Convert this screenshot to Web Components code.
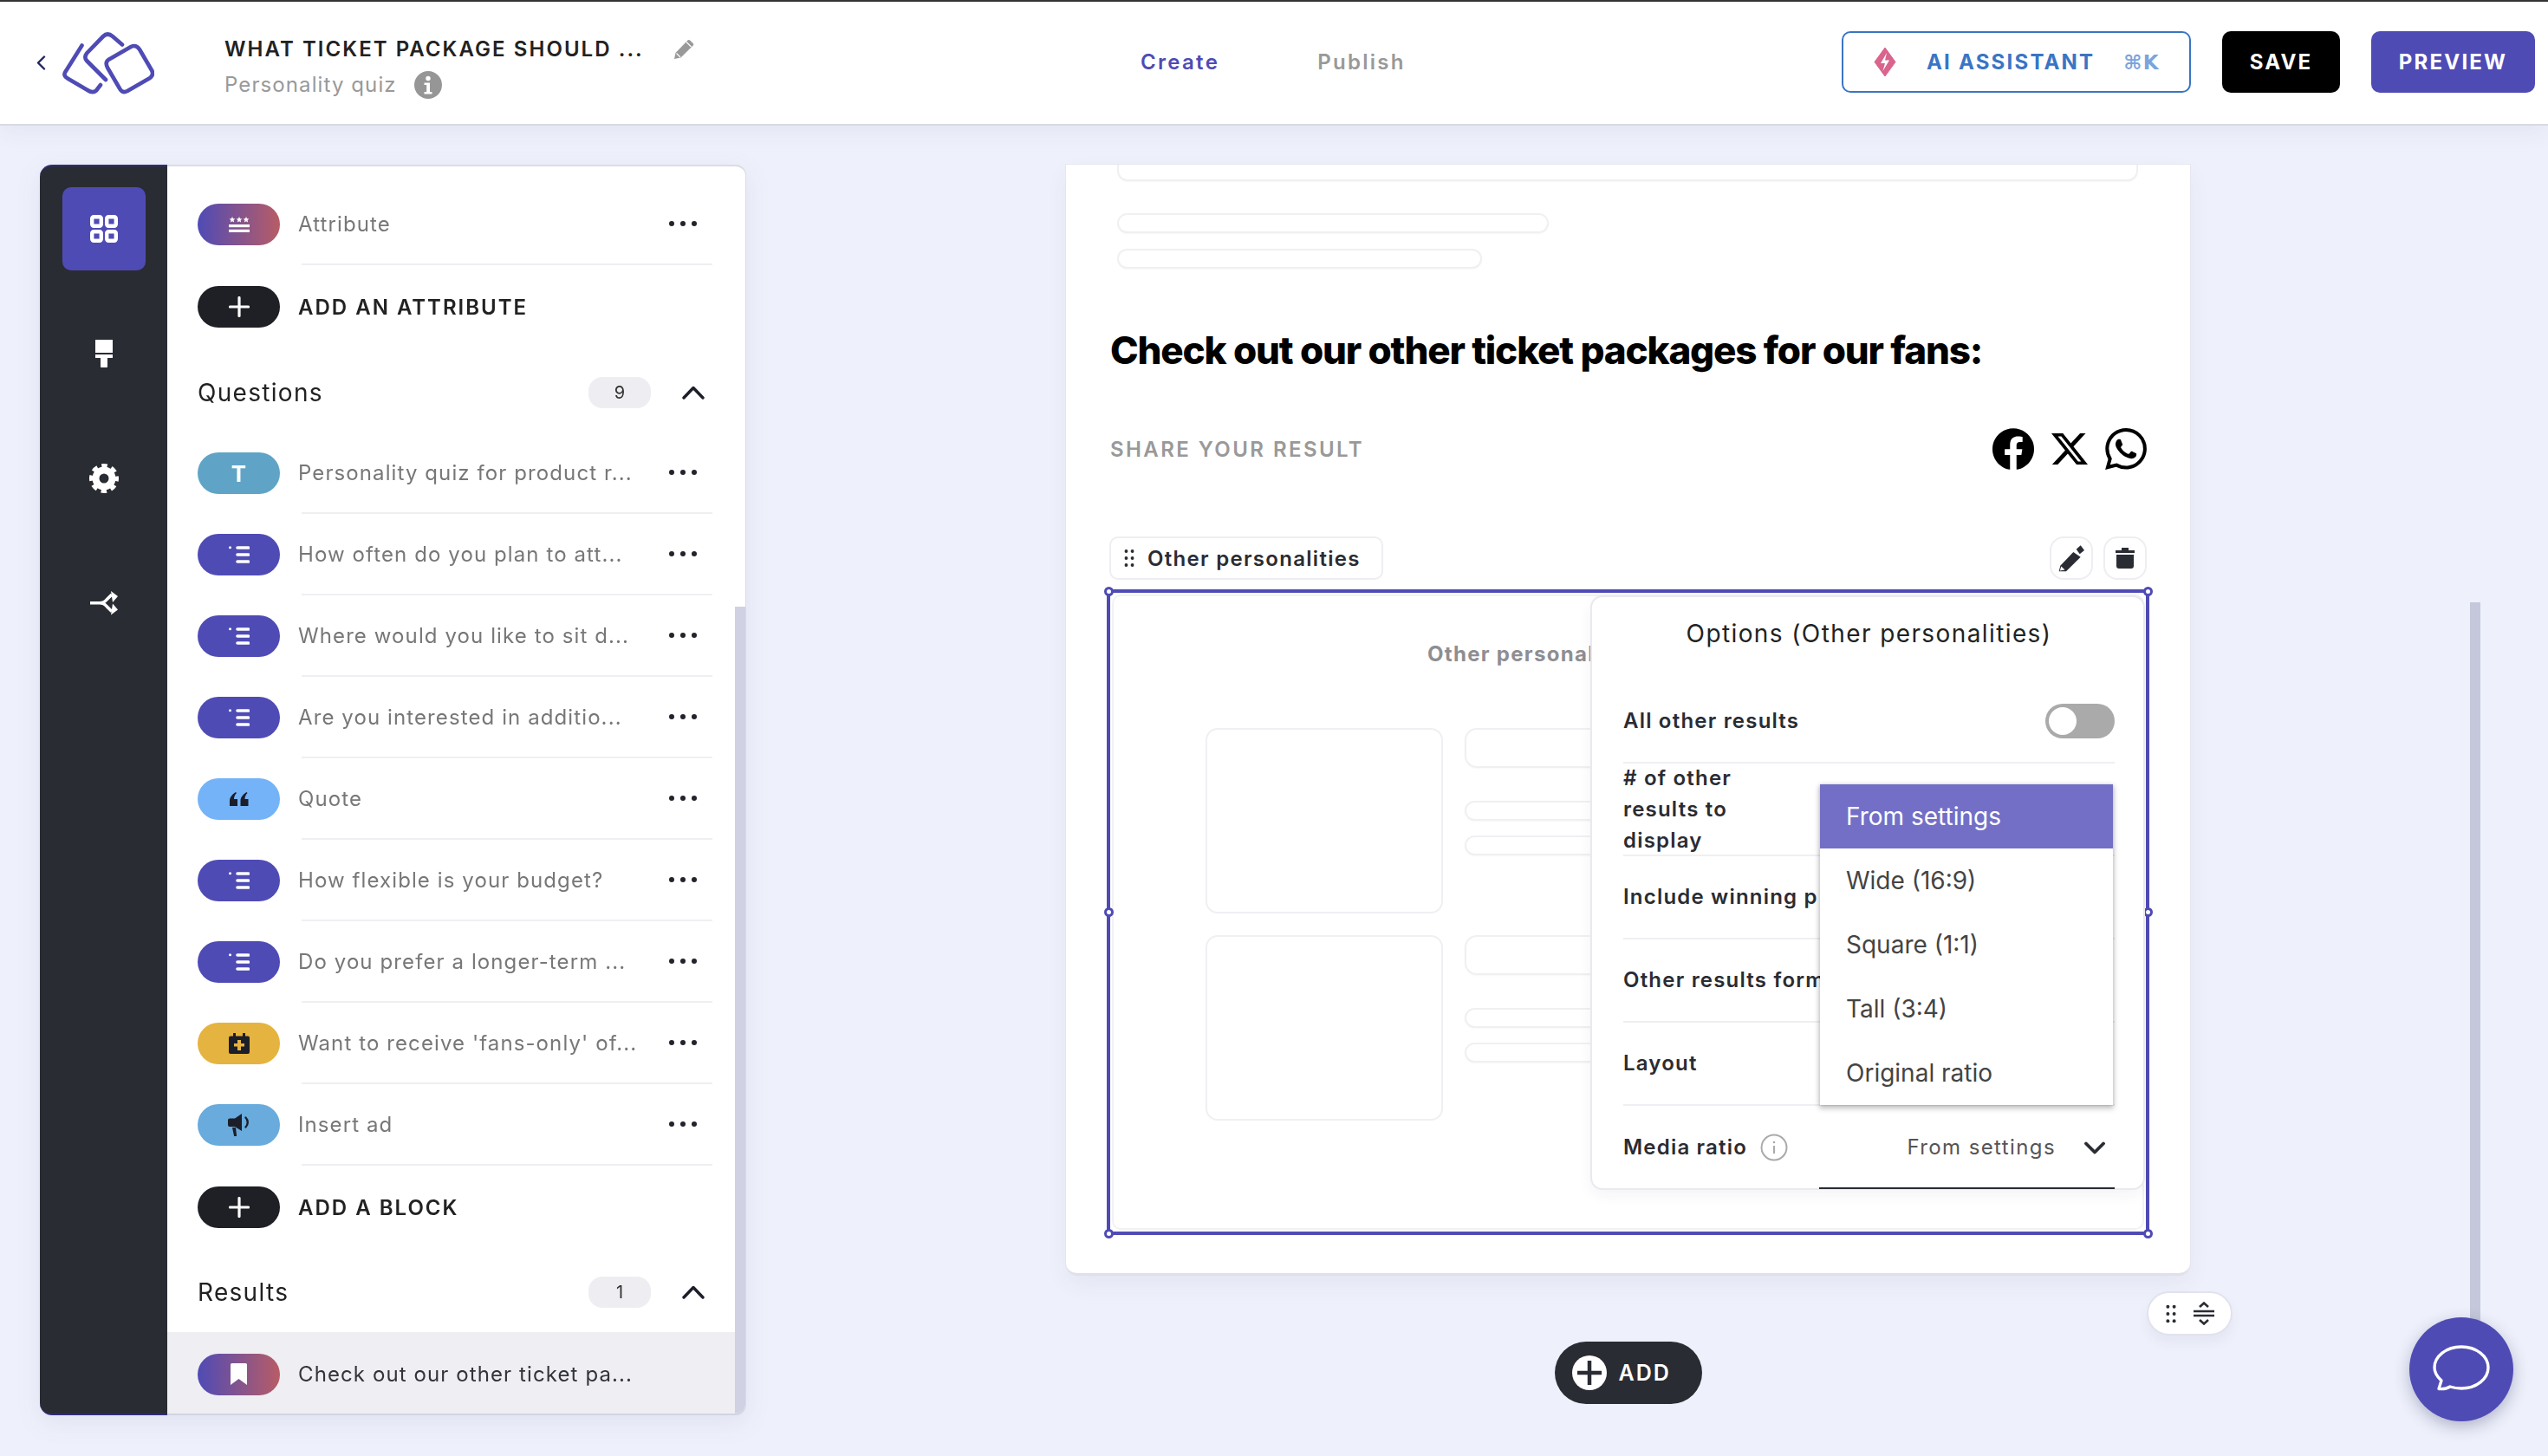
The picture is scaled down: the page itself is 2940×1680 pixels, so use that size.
<!doctype html>
<html lang="en">
  <head>
    <meta charset="UTF-8">
    <title>Quiz editor</title>
    <style>
      html, body { margin: 0; padding: 0; }
      body { width: 2940px; height: 1680px; overflow: hidden; font-family: Inter, "Liberation Sans", sans-serif; background: #eef1fb; }
    </style>
  </head>
  <body>
    <quiz-app>
      <quiz-topbar slot="top"></quiz-topbar>
      <quiz-sidebar slot="side">
        <block-row icon="attr" tone="grad">Attribute</block-row>
        <add-row last>ADD AN ATTRIBUTE</add-row>
        <section-head count="9" style="height: 97px">Questions</section-head>
        <block-row icon="t" tone="teal">Personality quiz for product r...</block-row>
        <block-row icon="list" tone="indigo">How often do you plan to att...</block-row>
        <block-row icon="list" tone="indigo">Where would you like to sit d...</block-row>
        <block-row icon="list" tone="indigo">Are you interested in additio...</block-row>
        <block-row icon="quote" tone="sky">Quote</block-row>
        <block-row icon="list" tone="indigo">How flexible is your budget?</block-row>
        <block-row icon="list" tone="indigo">Do you prefer a longer-term ...</block-row>
        <block-row icon="cal" tone="amber">Want to receive 'fans-only' of...</block-row>
        <block-row icon="mega" tone="blue">Insert ad</block-row>
        <add-row last>ADD A BLOCK</add-row>
        <section-head count="1" style="height: 96px">Results</section-head>
        <block-row icon="mark" tone="grad" selected>Check out our other ticket pa...</block-row>
      </quiz-sidebar>
      <quiz-canvas slot="main">
        <results-block></results-block>
      </quiz-canvas>
    </quiz-app>

    <script>
      const ICONS = {
        back: `<svg width="11" height="17" viewBox="0 0 11 17"><path d="M9 1.5 2 8.5l7 7" fill="none" stroke="#23255c" stroke-width="2.4" stroke-linecap="round" stroke-linejoin="round"/></svg>`,
        logo: `<svg width="106" height="74" viewBox="71 35 106 74"><g fill="none" stroke="#4f4bb5" stroke-width="4.6" stroke-linecap="round" stroke-linejoin="round"><path d="M93.5 51.500 75 81Q71 86 77 89.500L100 103Q106 107 110 103.500L115 97"/><path d="M140 50.500 129 41Q123 36 118 41L99.500 60Q95.500 65 99 69L121 91"/><path d="M124 68 150 53Q156 50 160 56L174 80Q177 85 172 89L146 104Q140 107 137 101L123 77Q120 71 124 68Z"/></g></svg>`,
        pencil: `<svg width="25" height="24" viewBox="0 0 25 24"><path d="M1 23l1.500-7L16.500 1.500c.8-.8 1.800-.8 2.600 0l3.600 3.400c.8.800.8 1.800 0 2.600L8.500 21.500z" fill="#999"/><path d="M15 3.500l5.500 5.500M3.500 16.500l4.500 4.500" stroke="#fff" stroke-width="1.200"/></svg>`,
        info: `<svg width="32" height="32" viewBox="0 0 32 32"><circle cx="16" cy="16" r="16" fill="#969696"/><circle cx="16" cy="8.500" r="2.700" fill="#fff"/><path d="M11.500 13.500h6.500v10.500h2.500v2.500h-9V24h2.700v-8h-2.700z" fill="#fff"/></svg>`,
        spark: `<svg width="26" height="33" viewBox="0 0 26 33"><path d="M13 0 25 16.500 13 33 1 16.500z" fill="#d9648d" stroke="#d9648d" stroke-linejoin="round"/><path d="M15 6 8 18h5l-2.500 9L18 14.500h-5z" fill="#fff"/></svg>`,
        grid: `<svg width="32" height="32" viewBox="0 0 32 32"><g fill="none" stroke="#fff" stroke-width="4.400"><rect x="2.200" y="2.200" width="10.600" height="10.600" rx="2"/><rect x="19.200" y="2.200" width="10.600" height="10.600" rx="2"/><rect x="2.200" y="19.200" width="10.600" height="10.600" rx="2"/><rect x="19.200" y="19.200" width="10.600" height="10.600" rx="2"/></g></svg>`,
        brush: `<svg width="20" height="32" viewBox="0 0 20 32"><path d="M0 0h20v15H0zM0 17h20v4h-6v9a4 4 0 0 1-8 0v-9H0z" fill="#fff"/></svg>`,
        gear: `<svg width="34" height="34" viewBox="0 0 34 34"><circle cx="17" cy="17" r="9.500" fill="none" stroke="#fff" stroke-width="8"/><circle cx="17" cy="17" r="14.500" fill="none" stroke="#fff" stroke-width="5" stroke-dasharray="6.400 5" stroke-dashoffset="3.200"/></svg>`,
        branch: `<svg width="32" height="32" viewBox="0 0 32 32"><path d="M0 15.700H11Q16 15.700 19 12L25 6M11 15.700Q16 15.700 19 19.500L25 25.500" fill="none" stroke="#fff" stroke-width="3.500"/><path d="M24 2 32 8 26 15zM24 29.400 32 23.400 26 16.400z" fill="#fff"/></svg>`,
        attr: `<svg width="24" height="18" viewBox="0 0 24 18"><g fill="#fff"><path d="M4 0l1 2.300 2.400.2-1.800 1.600.5 2.400L4 5.300 1.900 6.500l.5-2.400L.6 2.500 3 2.300z"/><path transform="translate(8)" d="M4 0l1 2.300 2.400.2-1.800 1.600.5 2.400L4 5.300 1.900 6.500l.5-2.400L.6 2.500 3 2.300z"/><path transform="translate(16)" d="M4 0l1 2.300 2.400.2-1.800 1.600.5 2.400L4 5.300 1.900 6.500l.5-2.400L.6 2.500 3 2.300z"/><rect y="9" width="24" height="3.200"/><rect y="14.800" width="24" height="3.200"/></g></svg>`,
        plus: `<svg width="24" height="24" viewBox="0 0 24 24"><path d="M12 1.500v21M1.500 12h21" stroke="#fff" stroke-width="3.200" stroke-linecap="round"/></svg>`,
        list: `<svg width="24" height="20" viewBox="0 0 24 20"><circle cx="1.500" cy="1.800" r="1.500" fill="#fff"/><path d="M10 2h12.500M10 10h12.500M10 18h12.500" stroke="#fff" stroke-width="3.600" stroke-linecap="round"/></svg>`,
        quote: `<svg width="22" height="16" viewBox="0 0 22 16"><g fill="#1c1e2a"><path d="M7 0C3 2.500 0 6 0 10v6h9V8H5c0-3 1-5 3-7z"/><path transform="translate(12.500)" d="M7 0C3 2.500 0 6 0 10v6h9V8H5c0-3 1-5 3-7z"/></g></svg>`,
        cal: `<svg width="24" height="24" viewBox="0 0 24 24"><path d="M5 0h3v3.500h8V0h3v3.500h3a2 2 0 0 1 2 2V22a2 2 0 0 1-2 2H2a2 2 0 0 1-2-2V5.500a2 2 0 0 1 2-2h3z" fill="#1c1e2a"/><path d="M10 8h4v4h4v3.500h-4V20h-4v-4.500H6V12h4z" fill="#e5b33f"/></svg>`,
        mega: `<svg width="25" height="26" viewBox="0 0 25 26"><g fill="#1c1e2a"><path d="M16 0v20L8 15H5v0H2a2 2 0 0 1-2-2V7.500a2 2 0 0 1 2-2h6z"/><path d="M5 16h4l1 9a1.500 1.500 0 0 1-3 .5z"/></g><path d="M20.500 4.500c3 3 3 8 0 11" fill="none" stroke="#1c1e2a" stroke-width="2.400" stroke-linecap="round"/></svg>`,
        mark: `<svg width="19" height="25" viewBox="0 0 19 25"><path d="M1.500 0h16A1.500 1.500 0 0 1 19 1.500V25l-9.500-7L0 25V1.500A1.500 1.500 0 0 1 1.500 0z" fill="#fff"/></svg>`,
        up: `<svg width="26" height="16" viewBox="0 0 26 16"><path d="M2 14 13 2.500 24 14" fill="none" stroke="#1c1e2a" stroke-width="3.400" stroke-linecap="round" stroke-linejoin="round"/></svg>`,
        down: `<svg width="24" height="15" viewBox="0 0 24 15"><path d="M2 2.500 12 12.500 22 2.500" fill="none" stroke="#2a2c33" stroke-width="3.800" stroke-linecap="round" stroke-linejoin="round"/></svg>`,
        dots: `<svg width="14" height="26" viewBox="0 0 14 26"><g fill="#2a2c33"><circle cx="2.500" cy="3" r="2.500"/><circle cx="11.500" cy="3" r="2.500"/><circle cx="2.500" cy="13" r="2.500"/><circle cx="11.500" cy="13" r="2.500"/><circle cx="2.500" cy="23" r="2.500"/><circle cx="11.500" cy="23" r="2.500"/></g></svg>`,
        edit: `<svg width="31" height="32" viewBox="0 0 31 32"><path d="M20.700 5.700 25.700 1.300 30 7 24.700 11.300z" fill="#2a2c33"/><path d="M17.300 9 25.700 14.700 9 31.300 .7 31.300 2.300 24.700z" fill="#2a2c33"/><path d="M3.300 25.500 7.500 29.600 1.800 30.600z" fill="#fff"/></svg>`,
        trash: `<svg width="22" height="24" viewBox="0 0 22 24"><path d="M7 0h8v3h7v3H0V3h7zM1 8h20v13a3 3 0 0 1-3 3H4a3 3 0 0 1-3-3z" fill="#2a2c33"/></svg>`,
        fb: `<svg width="48" height="48" viewBox="0 0 24 24"><path fill="#000" d="M24 12.073c0-6.627-5.373-12-12-12s-12 5.373-12 12c0 5.990 4.388 10.954 10.125 11.854v-8.385H7.078v-3.470h3.047V9.430c0-3.007 1.792-4.669 4.533-4.669 1.312 0 2.686.235 2.686.235v2.953H15.830c-1.491 0-1.956.925-1.956 1.874v2.250h3.328l-.532 3.470h-2.796v8.385C19.612 23.027 24 18.062 24 12.073z"/></svg>`,
        x: `<svg width="42" height="40" viewBox="0 0 24 24" preserveAspectRatio="none"><path fill="#000" d="M18.901 1.153h3.680l-8.040 9.190L24 22.846h-7.406l-5.800-7.584-6.638 7.584H.474l8.600-9.830L0 1.154h7.594l5.243 6.932ZM17.610 20.644h2.039L6.486 3.240H4.298Z"/></svg>`,
        wa: `<svg width="48" height="48" viewBox="0 0 24 24"><path fill="#000" d="M17.472 14.382c-.297-.149-1.758-.867-2.030-.967-.273-.099-.471-.148-.670.150-.197.297-.767.966-.940 1.164-.173.199-.347.223-.644.075-.297-.150-1.255-.463-2.390-1.475-.883-.788-1.480-1.761-1.653-2.059-.173-.297-.018-.458.130-.606.134-.133.298-.347.446-.520.149-.174.198-.298.298-.497.099-.198.050-.371-.025-.520-.075-.149-.669-1.612-.916-2.207-.242-.579-.487-.500-.669-.510-.173-.008-.371-.010-.570-.010-.198 0-.520.074-.792.372-.272.297-1.040 1.016-1.040 2.479 0 1.462 1.065 2.875 1.213 3.074.149.198 2.096 3.200 5.077 4.487.709.306 1.262.489 1.694.625.712.227 1.360.195 1.871.118.571-.085 1.758-.719 2.006-1.413.248-.694.248-1.289.173-1.413-.074-.124-.272-.198-.570-.347m-5.421 7.403h-.004a9.870 9.870 0 01-5.031-1.378l-.361-.214-3.741.982.998-3.648-.235-.374a9.860 9.860 0 01-1.510-5.260c.001-5.450 4.436-9.884 9.888-9.884 2.640 0 5.122 1.030 6.988 2.898a9.825 9.825 0 012.893 6.994c-.003 5.450-4.437 9.884-9.885 9.884m8.413-18.297A11.815 11.815 0 0012.050 0C5.495 0 .160 5.335.157 11.892c0 2.096.547 4.142 1.588 5.945L.057 24l6.305-1.654a11.882 11.882 0 005.683 1.448h.005c6.554 0 11.890-5.335 11.893-11.893a11.821 11.821 0 00-3.480-8.413Z"/></svg>`,
        iline: `<svg width="32" height="32" viewBox="0 0 32 32"><circle cx="16" cy="16" r="14.500" fill="none" stroke="#aaa" stroke-width="2"/><path d="M16 14v9" stroke="#aaa" stroke-width="2"/><circle cx="16" cy="10" r="1.300" fill="#aaa"/></svg>`,
        circlePlus: `<svg width="40" height="40" viewBox="0 0 40 40"><circle cx="20" cy="20" r="20" fill="#fff"/><path d="M20 6v28M6 20h28" stroke="#2a2c33" stroke-width="4.500"/></svg>`,
        resize: `<svg width="24" height="27" viewBox="0 0 24 27"><path d="M7 6l5-4.500L17 6M7 21l5 4.500L17 21" fill="none" stroke="#2a2c33" stroke-width="2.600"/><path d="M0 11h24M0 16h24" stroke="#2a2c33" stroke-width="2.400"/></svg>`,
        chat: `<svg width="68" height="58" viewBox="0 0 68 58"><path d="M8 50.500 11 41C6 36.500 3 31.500 3 26 3 13 16.500 2 34 2s31 11 31 24-13.500 24-31 24c-4.500 0-9-.7-13-2-4 2.500-8 3-13 2.500z" fill="none" stroke="#fff" stroke-width="3.400" stroke-linejoin="round"/></svg>`
      }

      class Base extends HTMLElement {
        constructor() {
          super()
          this.attachShadow({mode: "open"})
        }
      }

      class QuizApp extends Base {
        connectedCallback() {
          this.shadowRoot.innerHTML = `
            <style>
              :host { display: flex; flex-direction: column; width: 2940px; height: 1680px; position: relative; overflow: hidden; background: #eef1fb; }
              .work { display: flex; flex: 1; padding: 45px 0 0 46px; align-items: flex-start; }
              .page-bar { position: absolute; left: 2850px; top: 695px; width: 12px; height: 840px; background: #c5c7da; }
              .chat { position: absolute; left: 2780px; top: 1520px; width: 120px; height: 120px; border-radius: 50%; background: #4f4bb5; display: flex; align-items: center; justify-content: center; box-shadow: 0 6px 18px rgba(40,40,90,.3); }
              .chat svg { margin-top: 2px; }
            </style>
            <slot name="top"></slot>
            <div class="work">
              <slot name="side"></slot>
              <slot name="main"></slot>
            </div>
            <div class="page-bar"></div>
            <div class="chat">${ICONS.chat}</div>`
        }
      }

      class QuizTopbar extends Base {
        connectedCallback() {
          this.shadowRoot.innerHTML = `
            <style>
              :host { display: grid; grid-template-columns: 1316px 1fr auto; height: 145px; box-sizing: border-box; flex: none; background: #fff; border-top: 2px solid #333; border-bottom: 2px solid #d9d9e3; box-shadow: 0 8px 24px rgba(60,60,120,.06); position: relative; z-index: 2; color: #222; }
              .left { display: flex; align-items: center; padding-left: 42px; }
              .logo { margin: 0 81px 0 19px; display: flex; }
              .meta { margin-top: 16px; }
              .name { display: flex; align-items: center; gap: 34px; font-size: 24px; font-weight: 600; letter-spacing: 2.05px; line-height: 38px; white-space: nowrap; margin-top: -8px; }
              .sub { display: flex; align-items: center; gap: 20px; font-size: 24px; letter-spacing: 1.1px; color: #999; line-height: 34px; margin-top: 5px; }
              .tabs { display: flex; gap: 113px; font-size: 24px; font-weight: 600; letter-spacing: 2.3px; padding-top: 55px; color: #999; }
              .tabs b { font-weight: 600; color: #4f4bb5; }
              .actions { display: flex; gap: 36px; padding: 34px 15px 0 0; align-items: flex-start; }
              .btn { display: flex; align-items: center; justify-content: center; height: 71px; box-sizing: border-box; border-radius: 10px; font-size: 24px; font-weight: 700; letter-spacing: 2.2px; color: #fff; }
              .ai { width: 403px; background: #fff; border: 2px solid #3a75c4; color: #3a75c4; justify-content: flex-start; padding-left: 35px; }
              .ai span { margin-left: 35px; }
              .ai i { font-style: normal; margin-left: 33px; color: #7ba4dc; font-family: "DejaVu Sans", Inter, sans-serif; font-size: 23px; letter-spacing: 1px; }
              .save { width: 136px; background: #000; }
              .preview { width: 189px; background: #4f4bb5; }
            </style>
            <div class="left">
              ${ICONS.back}
              <div class="logo">${ICONS.logo}</div>
              <div class="meta">
                <div class="name">WHAT TICKET PACKAGE SHOULD ... ${ICONS.pencil}</div>
                <div class="sub">Personality quiz ${ICONS.info}</div>
              </div>
            </div>
            <div class="tabs"><b>Create</b><span>Publish</span></div>
            <div class="actions">
              <div class="btn ai">${ICONS.spark}<span>AI ASSISTANT</span><i>⌘K</i></div>
              <div class="btn save">SAVE</div>
              <div class="btn preview">PREVIEW</div>
            </div>`
        }
      }

      class QuizSidebar extends Base {
        connectedCallback() {
          const tabs = ["grid", "brush", "gear", "branch"]
          this.shadowRoot.innerHTML = `
            <style>
              :host { display: flex; width: 814px; height: 1443px; flex: none; filter: drop-shadow(0 8px 14px rgba(60,60,120,.08)); }
              .rail { width: 147px; flex: none; box-sizing: border-box; background: #2a2c33; border-radius: 14px 0 0 14px; border-top: 2px solid #2f2d7a; border-bottom: 2px solid #2f2d7a; padding: 24px 26px 0; display: flex; flex-direction: column; gap: 48px; }
              .rail div { width: 96px; height: 96px; border-radius: 10px; display: flex; align-items: center; justify-content: center; }
              .rail div:first-child { background: #4f4bb5; }
              .panel { flex: 1; position: relative; box-sizing: border-box; background: #fff; border-radius: 0 12px 12px 0; border-top: 2px solid #dcdce6; border-bottom: 2px solid #d3d3e0; box-shadow: 1px 0 0 #dcdce8; padding: 20px 38px 0 35px; display: flex; flex-direction: column; overflow: hidden; }
              .thumb { position: absolute; right: 0; top: 508px; bottom: 0; width: 12px; background: #d0d1e2; }
            </style>
            <div class="rail">${tabs.map(t => `<div>${ICONS[t]}</div>`).join("")}</div>
            <div class="panel"><slot></slot><span class="thumb"></span></div>`
        }
      }

      class BlockRow extends Base {
        connectedCallback() {
          const tones = {
            grad: "linear-gradient(90deg,#4f4bb5,#b85c66)", teal: "#5fa4c6", indigo: "#4f4bb5",
            sky: "#75b3f8", amber: "#e5b33f", blue: "#68abdc", dark: "#1f2026"
          }
          const name = this.getAttribute("icon")
          const glyph = name == "t" ? `<b>T</b>` : ICONS[name]
          const selected = this.hasAttribute("selected")
          this.shadowRoot.innerHTML = `
            <style>
              :host { display: flex; align-items: center; height: 94px; flex: none; ${selected ? "height: 97px; background: #eeeef3; margin: 0 -26px 0 -35px; padding: 0 26px 5px 35px;" : ""} }
              .pill { width: 95px; height: 48px; flex: none; border-radius: 24px; display: flex; align-items: center; justify-content: center; background: ${tones[this.getAttribute("tone")]}; color: #fff; font-size: 26px; }
              .body { flex: 1; height: 100%; box-sizing: border-box; margin-left: 25px; display: flex; align-items: center; justify-content: space-between; ${selected ? "" : "border-bottom: 2px solid #efeff3;"} }
              .label { margin-left: -4px; font-size: 24px; letter-spacing: 1.1px; color: ${selected ? "#33343a" : "#777"}; white-space: nowrap; }
              .more { display: flex; gap: 7px; margin-right: 18px; ${selected ? "visibility: hidden;" : ""} }
              .more i { width: 6px; height: 6px; border-radius: 50%; background: #22232b; }
            </style>
            <div class="pill">${glyph}</div>
            <div class="body"><span class="label"><slot></slot></span><span class="more"><i></i><i></i><i></i></span></div>`
        }
      }

      class AddRow extends Base {
        connectedCallback() {
          this.shadowRoot.innerHTML = `
            <style>
              :host { display: flex; align-items: center; height: 96px; flex: none; }
              .pill { width: 95px; height: 48px; border-radius: 24px; background: #1f2026; display: flex; align-items: center; justify-content: center; }
              .label { margin-left: 21px; font-size: 24px; font-weight: 600; letter-spacing: 2px; color: #222; }
            </style>
            <div class="pill">${ICONS.plus}</div>
            <span class="label"><slot></slot></span>`
        }
      }

      class SectionHead extends Base {
        connectedCallback() {
          this.shadowRoot.innerHTML = `
            <style>
              :host { display: flex; align-items: center; flex: none; padding-top: 4px; box-sizing: border-box; }
              .label { flex: 1; font-size: 28px; letter-spacing: 1.3px; color: #222; }
              .count { width: 72px; height: 36px; border-radius: 16px; background: #eeeef2; font-size: 20px; color: #333; display: flex; align-items: center; justify-content: center; }
              svg { margin: 0 9px 0 36px; }
            </style>
            <span class="label"><slot></slot></span>
            <span class="count">${this.getAttribute("count")}</span>${ICONS.up}`
        }
      }

      class QuizCanvas extends Base {
        connectedCallback() {
          this.shadowRoot.innerHTML = `
            <style>
              :host { display: flex; flex-direction: column; align-items: center; width: 1297px; margin-left: 370px; flex: none; position: relative; }
              .card { width: 100%; height: 1282px; box-sizing: border-box; background: #fff; border-radius: 0 0 14px 14px; border-bottom: 3px solid #e0e0ea; box-shadow: 0 0 0 1px #e6e6f0, 0 10px 26px rgba(60,60,120,.06); overflow: hidden; }
              .add { margin-top: 76px; width: 170px; height: 72px; border-radius: 36px; background: #2a2c33; color: #fff; display: flex; align-items: center; padding-left: 20px; box-sizing: border-box; gap: 14px; font-size: 25px; font-weight: 600; letter-spacing: 2px; }
              .chip { position: absolute; left: 1247px; top: 1300px; width: 99px; height: 51px; background: #fff; border: 2px solid #e2e2ee; box-sizing: border-box; border-radius: 26px; display: flex; align-items: center; justify-content: center; gap: 19px; box-shadow: 0 8px 14px rgba(60,60,120,.06); }
              .chip svg:first-child { transform: scale(.82); }
            </style>
            <div class="card"><slot></slot></div>
            <div class="add">${ICONS.circlePlus}ADD</div>
            <div class="chip">${ICONS.dots}${ICONS.resize}</div>`
        }
      }

      class ResultsBlock extends Base {
        connectedCallback() {
          const entry = `
            <div class="img"></div>
            <div class="copy"><div class="ph title"></div><div class="ph line"></div><div class="ph line"></div></div>`
          this.shadowRoot.innerHTML = `
            <style>
              :host { display: block; }
              .ph { border: 2px solid #f0f0f3; box-sizing: border-box; background: #fff; box-shadow: 0 1px 2px rgba(0,0,0,.03); }
              .top { height: 19px; margin: 0 60px 0 59px; border-top: 0; border-radius: 0 0 12px 12px; }
              .bar { height: 23px; border-radius: 12px; margin: 37px 0 0 59px; }
              .bar + .bar { margin-top: 18px; }
              h1 { margin: 64px 0 0 51px; font-size: 44px; line-height: 60px; font-weight: 800; letter-spacing: -1.17px; color: #000; }
              .share { display: flex; align-items: center; justify-content: space-between; margin: 60px 50px 0 51px; height: 48px; font-size: 24px; font-weight: 600; letter-spacing: 2.43px; color: #999; }
              .social { display: flex; align-items: center; gap: 20px; }
              .tools { display: flex; justify-content: space-between; margin: 77px 50px 0 50px; }
              .tag { display: flex; align-items: center; height: 50px; box-sizing: border-box; padding: 0 24px 0 14px; gap: 14px; background: #fff; border: 2px solid #eeeef2; border-radius: 10px; font-size: 24px; font-weight: 600; letter-spacing: 1.3px; color: #2a2c33; }
              .tag svg { transform: scale(.8); }
              .btns { display: flex; gap: 12px; }
              .btns div { width: 50px; height: 50px; box-sizing: border-box; border: 2px solid #eeeef2; border-radius: 16px; display: flex; align-items: center; justify-content: center; }
              .frame { position: relative; margin: 11px 47px 0 47px; height: 745px; box-sizing: border-box; border: 4px solid #4f4bb5; padding: 2px; }
              .inner { height: 100%; box-sizing: border-box; border: 2px solid #f2f2f5; border-radius: 10px; padding: 52px 0 0 362px; }
              .dot { position: absolute; width: 11px; height: 11px; border-radius: 50%; background: #fff; border: 3px solid #4f4bb5; box-sizing: border-box; margin: -5.5px; }
              .other { font-size: 24px; line-height: 30px; font-weight: 700; letter-spacing: 1.3px; color: #8e8e92; white-space: nowrap; }
              .rows { margin: 70px 0 0 -256px; display: grid; grid-template-columns: 274px 675px; gap: 25px; grid-auto-rows: 214px; }
              .img { border: 2px solid #f0f0f3; border-radius: 14px; }
              .copy .ph { border-radius: 14px; }
              .copy .title { height: 46px; margin-bottom: 38px; }
              .copy .line { height: 23px; margin-bottom: 17px; border-radius: 12px; }
            </style>
            <div class="ph top"></div>
            <div class="ph bar" style="width: 498px"></div>
            <div class="ph bar" style="width: 421px"></div>
            <h1>Check out our other ticket packages for our fans:</h1>
            <div class="share"><span>SHARE YOUR RESULT</span><span class="social">${ICONS.fb}${ICONS.x}${ICONS.wa}</span></div>
            <div class="tools">
              <div class="tag">${ICONS.dots}Other personalities</div>
              <div class="btns"><div>${ICONS.edit}</div><div>${ICONS.trash}</div></div>
            </div>
            <div class="frame">
              <div class="inner">
                <div class="other">Other personalities</div>
                <div class="rows">${entry}${entry}</div>
              </div>
              <i class="dot" style="left:-2px;top:-2px"></i><i class="dot" style="right:-2px;top:-2px"></i>
              <i class="dot" style="left:-2px;top:50%"></i><i class="dot" style="right:-2px;top:50%"></i>
              <i class="dot" style="left:-2px;bottom:-2px"></i><i class="dot" style="right:-2px;bottom:-2px"></i>
              <options-panel></options-panel>
            </div>`
        }
      }

      class OptionsPanel extends Base {
        connectedCallback() {
          const menu = ["From settings", "Wide (16:9)", "Square (1:1)", "Tall (3:4)", "Original ratio"]
          this.shadowRoot.innerHTML = `
            <style>
              :host { position: absolute; left: 554px; top: 3px; width: 640px; height: 686px; box-sizing: border-box; background: #fff; border: 2px solid #e9e9ee; border-radius: 14px; padding: 0 33px 0 36px; box-shadow: 0 6px 16px rgba(40,40,90,.05); color: #2a2c33; }
              h2 { margin: 0; height: 96px; padding-bottom: 12px; box-sizing: border-box; display: flex; align-items: center; justify-content: center; font-size: 28px; font-weight: 400; letter-spacing: 1.4px; color: #222; }
              .row { display: flex; align-items: center; justify-content: space-between; height: 96px; box-sizing: border-box; border-bottom: 2px solid #efeff3; font-size: 24px; font-weight: 600; letter-spacing: 1.2px; line-height: 36px; }
              .row.tall { height: 107px; }
              .row.last { height: 96px; border-bottom: 0; position: relative; }
              .row.last::after { content: ""; position: absolute; left: 226px; right: 0; bottom: 0; height: 2px; background: #2a2c33; }
              .switch { width: 80px; height: 40px; border-radius: 20px; background: #aaa; display: flex; align-items: center; padding-left: 4px; box-sizing: border-box; }
              .switch i { width: 32px; height: 32px; border-radius: 50%; background: #fff; }
              .label { display: flex; align-items: center; gap: 15px; }
              .value { display: flex; align-items: center; gap: 33px; font-weight: 400; color: #555; letter-spacing: 1.4px; margin-right: 11px; }
              .menu { position: absolute; left: 263px; top: 216px; width: 338px; height: 370px; background: #fff; box-shadow: 0 3px 6px 1px rgba(0,0,0,.24), 0 0 4px rgba(0,0,0,.1); font-size: 28px; font-weight: 400; color: #444; }
              .menu div { height: 74px; display: flex; align-items: center; padding-left: 30px; }
              .menu .on { background: #736fc6; color: #fff; }
            </style>
            <h2>Options (Other personalities)</h2>
            <div class="row"><span>All other results</span><span class="switch"><i></i></span></div>
            <div class="row tall"><span># of other<br>results to<br>display</span></div>
            <div class="row"><span>Include winning p</span></div>
            <div class="row"><span>Other results form</span></div>
            <div class="row"><span>Layout</span></div>
            <div class="row last"><span class="label">Media ratio ${ICONS.iline}</span><span class="value">From settings ${ICONS.down}</span></div>
            <div class="menu">${menu.map((m, i) => `<div class="${i ? "" : "on"}">${m}</div>`).join("")}</div>`
        }
      }

      customElements.define("block-row", BlockRow)
      customElements.define("add-row", AddRow)
      customElements.define("section-head", SectionHead)
      customElements.define("options-panel", OptionsPanel)
      customElements.define("results-block", ResultsBlock)
      customElements.define("quiz-topbar", QuizTopbar)
      customElements.define("quiz-sidebar", QuizSidebar)
      customElements.define("quiz-canvas", QuizCanvas)
      customElements.define("quiz-app", QuizApp)
    </script>
  </body>
</html>
